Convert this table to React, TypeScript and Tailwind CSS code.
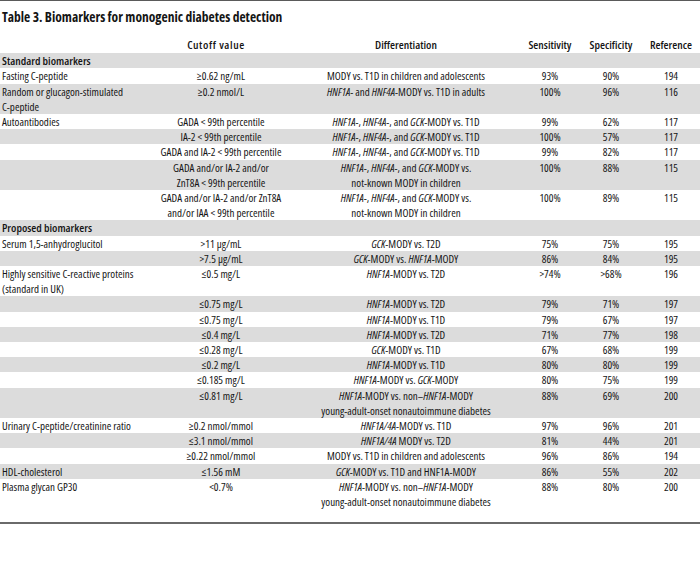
import React from "react";

type DataRow = {
  c1?: React.ReactNode;
  c2?: React.ReactNode;
  c3?: React.ReactNode;
  sens?: string;
  spec?: string;
  ref?: string;
  section?: string;
};

const I = ({ children }: { children: React.ReactNode }) => <i>{children}</i>;

const rows: DataRow[] = [
  { section: "Standard biomarkers" },
  { c1: "Fasting C-peptide", c2: "≥0.62 ng/mL", c3: "MODY vs. T1D in children and adolescents", sens: "93%", spec: "90%", ref: "194" },
  {
    c1: (<>Random or glucagon-stimulated<br />C-peptide</>),
    c2: "≥0.2 nmol/L",
    c3: (<><I>HNF1A</I>- and <I>HNF4A</I>-MODY vs. T1D in adults</>),
    sens: "100%", spec: "96%", ref: "116",
  },
  { c1: "Autoantibodies", c2: "GADA < 99th percentile", c3: (<><I>HNF1A</I>-, <I>HNF4A</I>-, and <I>GCK</I>-MODY vs. T1D</>), sens: "99%", spec: "62%", ref: "117" },
  { c2: "IA-2 < 99th percentile", c3: (<><I>HNF1A</I>-, <I>HNF4A</I>-, and <I>GCK</I>-MODY vs. T1D</>), sens: "100%", spec: "57%", ref: "117" },
  { c2: "GADA and IA-2 < 99th percentile", c3: (<><I>HNF1A</I>-, <I>HNF4A</I>-, and <I>GCK</I>-MODY vs. T1D</>), sens: "99%", spec: "82%", ref: "117" },
  {
    c2: (<>GADA and/or IA-2 and/or<br />{"ZnT8A < 99th percentile"}</>),
    c3: (<><I>HNF1A</I>-, <I>HNF4A</I>-, and <I>GCK</I>-MODY vs.<br />not-known MODY in children</>),
    sens: "100%", spec: "88%", ref: "115",
  },
  {
    c2: (<>GADA and/or IA-2 and/or ZnT8A<br />{"and/or IAA < 99th percentile"}</>),
    c3: (<><I>HNF1A</I>-, <I>HNF4A</I>-, and <I>GCK</I>-MODY vs.<br />not-known MODY in children</>),
    sens: "100%", spec: "89%", ref: "115",
  },
  { section: "Proposed biomarkers" },
  { c1: "Serum 1,5-anhydroglucitol", c2: ">11 μg/mL", c3: (<><I>GCK</I>-MODY vs. T2D</>), sens: "75%", spec: "75%", ref: "195" },
  { c2: ">7.5 μg/mL", c3: (<><I>GCK</I>-MODY vs. <I>HNF1A</I>-MODY</>), sens: "86%", spec: "84%", ref: "195" },
  {
    c1: (<>Highly sensitive C-reactive proteins<br />(standard in UK)</>),
    c2: "≤0.5 mg/L",
    c3: (<><I>HNF1A</I>-MODY vs. T2D</>),
    sens: ">74%", spec: ">68%", ref: "196",
  },
  { c2: "≤0.75 mg/L", c3: (<><I>HNF1A</I>-MODY vs. T2D</>), sens: "79%", spec: "71%", ref: "197" },
  { c2: "≤0.75 mg/L", c3: (<><I>HNF1A</I>-MODY vs. T1D</>), sens: "79%", spec: "67%", ref: "197" },
  { c2: "≤0.4 mg/L", c3: (<><I>HNF1A</I>-MODY vs. T2D</>), sens: "71%", spec: "77%", ref: "198" },
  { c2: "≤0.28 mg/L", c3: (<><I>GCK</I>-MODY vs. T1D</>), sens: "67%", spec: "68%", ref: "199" },
  { c2: "≤0.2 mg/L", c3: (<><I>HNF1A</I>-MODY vs. T1D</>), sens: "80%", spec: "80%", ref: "199" },
  { c2: "≤0.185 mg/L", c3: (<><I>HNF1A</I>-MODY vs. <I>GCK</I>-MODY</>), sens: "80%", spec: "75%", ref: "199" },
  {
    c2: "≤0.81 mg/L",
    c3: (<><I>HNF1A</I>-MODY vs. non–<I>HNF1A</I>-MODY<br />young-adult-onset nonautoimmune diabetes</>),
    sens: "88%", spec: "69%", ref: "200",
  },
  { c1: "Urinary C-peptide/creatinine ratio", c2: "≥0.2 nmol/mmol", c3: (<><I>HNF1A/4A</I>-MODY vs. T1D</>), sens: "97%", spec: "96%", ref: "201" },
  { c2: "≤3.1 nmol/mmol", c3: (<><I>HNF1A/4A</I> MODY vs. T2D</>), sens: "81%", spec: "44%", ref: "201" },
  { c2: "≥0.22 nmol/mmol", c3: "MODY vs. T1D in children and adolescents", sens: "96%", spec: "86%", ref: "194" },
  { c1: "HDL-cholesterol", c2: "≤1.56 mM", c3: (<><I>GCK</I>-MODY vs. T1D and HNF1A-MODY</>), sens: "86%", spec: "55%", ref: "202" },
  {
    c1: "Plasma glycan GP30",
    c2: "<0.7%",
    c3: (<><I>HNF1A</I>-MODY vs. non–<I>HNF1A</I>-MODY<br />young-adult-onset nonautoimmune diabetes</>),
    sens: "88%", spec: "80%", ref: "200",
  },
];

export default function App() {
  return (
    <div className="w-[700px] bg-white font-['Open_Sans',sans-serif] text-[#151515] [font-stretch:75%]">
      <div className="h-px bg-[#5a5a5a]" />
      <div className="pt-[8px] pl-[2px] text-[13.5px] font-bold leading-[16px] whitespace-nowrap">
        Table 3. Biomarkers for monogenic diabetes detection
      </div>
      <table className="mt-[12px] w-full table-fixed border-collapse text-[11px] leading-[15.2px] font-[450]">
        <colgroup>
          <col className="w-[150px]" />
          <col className="w-[142px]" />
          <col className="w-[228px]" />
          <col className="w-[60px]" />
          <col className="w-[62px]" />
          <col className="w-[58px]" />
        </colgroup>
        <thead>
          <tr className="text-[11.5px]">
            <th className="pb-[1px] font-semibold" />
            <th className="pb-[1px] pr-[10px] text-center font-semibold tracking-[0.6px] whitespace-nowrap">Cutoff value</th>
            <th className="pb-[1px] text-center font-semibold whitespace-nowrap">Differentiation</th>
            <th className="pb-[1px] text-center font-semibold whitespace-nowrap">Sensitivity</th>
            <th className="pb-[1px] text-center font-semibold whitespace-nowrap">Specificity</th>
            <th className="pb-[1px] text-center font-semibold whitespace-nowrap">Reference</th>
          </tr>
        </thead>
        <tbody>
          {rows.map((r, i) => {
            const bg = i % 2 === 0 ? "bg-[#dcdcdc]" : "bg-white";
            if (r.section) {
              return (
                <tr key={i} className={bg}>
                  <td colSpan={6} className="pl-[2px] align-top text-[11.5px] font-semibold whitespace-nowrap">
                    {r.section}
                  </td>
                </tr>
              );
            }
            return (
              <tr key={i} className={bg}>
                <td className="pl-[2px] align-top whitespace-nowrap">{r.c1}</td>
                <td className="text-center align-top whitespace-nowrap">{r.c2}</td>
                <td className="text-center align-top whitespace-nowrap">{r.c3}</td>
                <td className="text-center align-top whitespace-nowrap">{r.sens}</td>
                <td className="text-center align-top whitespace-nowrap">{r.spec}</td>
                <td className="text-center align-top whitespace-nowrap">{r.ref}</td>
              </tr>
            );
          })}
          <tr>
            <td colSpan={6} className="h-[13px]" />
          </tr>
        </tbody>
      </table>
      <div className="h-[2px] bg-[#6a6a6a]" />
    </div>
  );
}
